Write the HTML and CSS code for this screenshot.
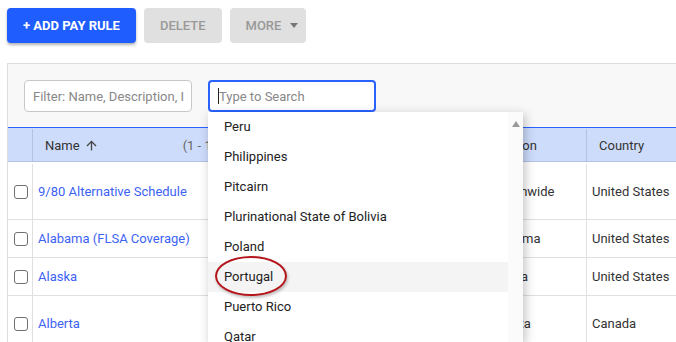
FILE: index.html
```html
<!DOCTYPE html>
<html lang="en">
<head>
	<meta charset="UTF-8">
	<title>Pay Rules</title>
	<link rel="stylesheet" href="styles.css">
</head>
<body>
	<div id="toolbar">
		<div class="btn primary">+ Add Pay Rule</div>
		<div class="btn disabled">Delete</div>
		<div class="btn disabled more">More <span class="caret"></span></div>
	</div>
	<div id="panel">
		<div id="filters">
			<div class="field"><span class="placeholder">Filter: Name, Description, I</span></div>
			<div class="field focus" id="search">
				<span class="cursor"></span><span class="placeholder">Type to Search</span>
				<div id="dropdown">
					<div id="options">
						<div class="option">Peru</div>
						<div class="option">Philippines</div>
						<div class="option">Pitcairn</div>
						<div class="option">Plurinational State of Bolivia</div>
						<div class="option">Poland</div>
						<div class="option hover">Portugal<div class="circle"></div></div>
						<div class="option">Puerto Rico</div>
						<div class="option">Qatar</div>
					</div>
					<div id="scroll"><div class="uparrow"></div></div>
				</div>
			</div>
		</div>
		<div id="grid">
			<div class="row head">
				<div class="cell"></div>
				<div class="cell">Name
					<svg class="sort" width="15" height="15" viewBox="0 0 24 24"><path d="M4 12l1.41 1.41L11 7.83V20h2V7.83l5.58 5.59L20 12l-8-8-8 8z" fill="#444"/></svg>
					<span class="count">(1 - 100 of 412)</span>
				</div>
				<div class="cell">Jurisdiction</div>
				<div class="cell">Country</div>
			</div>
			<div class="row tall">
				<div class="cell"><span class="check"></span></div>
				<div class="cell"><a href="#">9/80 Alternative Schedule</a></div>
				<div class="cell jur">Nationwide</div>
				<div class="cell">United States</div>
			</div>
			<div class="row">
				<div class="cell"><span class="check"></span></div>
				<div class="cell"><a href="#">Alabama (FLSA Coverage)</a></div>
				<div class="cell jur">Alabama</div>
				<div class="cell">United States</div>
			</div>
			<div class="row">
				<div class="cell"><span class="check"></span></div>
				<div class="cell"><a href="#">Alaska</a></div>
				<div class="cell jur">Alaska</div>
				<div class="cell">United States</div>
			</div>
			<div class="row last">
				<div class="cell"><span class="check"></span></div>
				<div class="cell"><a href="#">Alberta</a></div>
				<div class="cell jur">Alberta</div>
				<div class="cell">Canada</div>
			</div>
		</div>
	</div>
</body>
</html>
```

FILE: styles.css
```css
*{
	margin: 0;
	padding: 0;
	box-sizing: border-box;
	font-family: Roboto, "Liberation Sans", Arial, sans-serif;
}
body{
	background-color: #fff;
	width: 676px;
	height: 342px;
	overflow: hidden;
	font-size: 13px;
	color: #333;
}
#toolbar{
	display: flex;
	gap: 8px;
	padding: 8px 0 0 7px;
	height: 63px;
}
.btn{
	height: 35px;
	display: flex;
	align-items: center;
	padding: 0 16px;
	border-radius: 4px;
	text-transform: uppercase;
	font-size: 13px;
	font-weight: 500;
}
.primary{
	background-color: #1f5dff;
	color: #fff;
	font-weight: bold;
	box-shadow: 0 2px 3px rgba(0,0,0,0.3);
}
.disabled{
	background-color: #e0e0e0;
	color: #999;
}
.more{
	padding-right: 8px;
}
.caret{
	margin-left: 9px;
	border-left: 4px solid transparent;
	border-right: 4px solid transparent;
	border-top: 5px solid #777;
}
#panel{
	margin-left: 7px;
	background-color: #f8f8f8;
	border-top: 1px solid #ddd;
	border-left: 1px solid #ddd;
	width: 700px;
}
#filters{
	display: flex;
	gap: 16px;
	padding: 16px 0 15px 16px;
}
.field{
	width: 168px;
	height: 32px;
	background-color: #fff;
	border: 1px solid #c8c8c8;
	border-radius: 4px;
	display: flex;
	align-items: center;
	padding-left: 8px;
	white-space: nowrap;
	overflow: hidden;
}
.placeholder{
	color: #888;
}
.focus{
	border: 2px solid #2962ff;
	overflow: visible;
	position: relative;
}
.cursor{
	width: 1px;
	height: 16px;
	background-color: #222;
}
#dropdown{
	position: absolute;
	top: calc(100% + 2px);
	left: -2px;
	width: 315px;
	height: 230px;
	background-color: #fff;
	box-shadow: 2px 3px 10px rgba(0,0,0,0.25);
	display: flex;
	z-index: 5;
	overflow: hidden;
}
#options{
	width: 300px;
}
.option{
	height: 30px;
	line-height: 30px;
	padding-left: 16px;
	color: #222;
	position: relative;
}
.hover{
	background-color: #f4f4f4;
}
.circle{
	position: absolute;
	left: 7px;
	top: -6px;
	width: 72px;
	height: 40px;
	border: 2px solid #b3151b;
	border-radius: 50%;
	box-shadow: 1px 2px 3px rgba(0,0,0,0.25);
}
#scroll{
	width: 15px;
	background-color: #fbfbfb;
	display: flex;
	justify-content: center;
	padding-top: 9px;
}
.uparrow{
	border-left: 4px solid transparent;
	border-right: 4px solid transparent;
	border-bottom: 6px solid #999;
	height: 0;
}
#grid{
	background-color: #fff;
}
.row{
	display: grid;
	grid-template-columns: 25px 424px 130px 200px;
	height: 38px;
	border-bottom: 1px solid #e0e0e0;
}
.tall{
	height: 58px;
	padding-top: 2px;
}
.last{
	height: 56px;
}
.cell{
	display: flex;
	align-items: center;
	padding-left: 5px;
	border-right: 1px solid #e0e0e0;
	white-space: nowrap;
	overflow: hidden;
}
.cell:first-child{
	padding-left: 0;
	justify-content: center;
}
.jur{
	padding-left: 32px;
}
.head{
	background-color: #cedcfb;
	border-top: 1px solid #2962ff;
	border-bottom: 1px solid #b4c2e2;
	height: 35px;
	padding-top: 1px;
}
.head .cell{
	padding-left: 12px;
	border-right-color: #b4c2e2;
}
.head .cell:first-child{
	padding-left: 0;
}
.sort{
	margin-left: 4px;
}
.count{
	margin-left: 84px;
	color: #666;
}
.check{
	width: 14px;
	height: 14px;
	border: 1.5px solid #707070;
	border-radius: 3px;
	margin-left: 1px;
}
a{
	color: #3d63f5;
	text-decoration: none;
}
```
